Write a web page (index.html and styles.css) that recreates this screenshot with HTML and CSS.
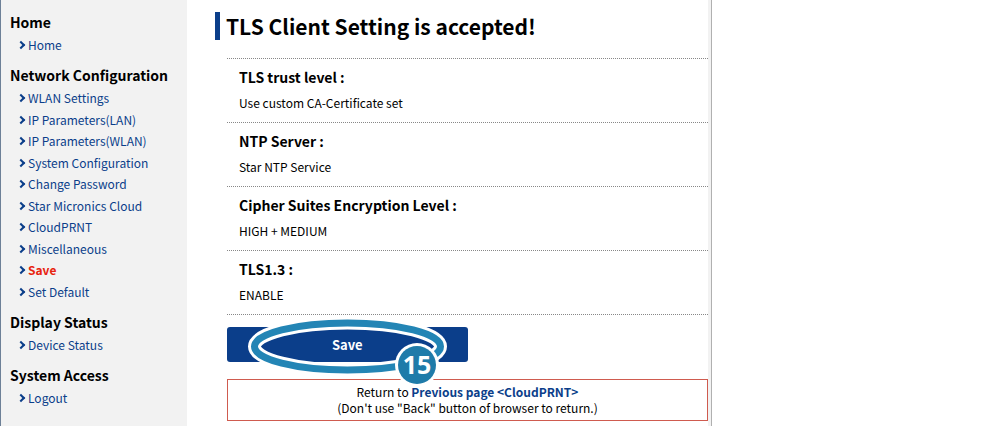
FILE: index.html
```html
<!DOCTYPE html>
<html lang="en">

<head>
    <meta charset="UTF-8">
    <meta name="viewport" content="width=device-width, initial-scale=1.0">
    <title>TLS Client Setting</title>
    <link rel="stylesheet" href="styles.css">
</head>

<body>
    <div class="page">
        <!-- side menu -->
        <nav class="side">
            <h2>Home</h2>
            <ul>
                <li><a href="#">Home</a></li>
            </ul>
            <h2>Network Configuration</h2>
            <ul>
                <li><a href="#">WLAN Settings</a></li>
                <li><a href="#">IP Parameters(LAN)</a></li>
                <li><a href="#">IP Parameters(WLAN)</a></li>
                <li><a href="#">System Configuration</a></li>
                <li><a href="#">Change Password</a></li>
                <li><a href="#">Star Micronics Cloud</a></li>
                <li><a href="#">CloudPRNT</a></li>
                <li><a href="#">Miscellaneous</a></li>
                <li><a class="current" href="#">Save</a></li>
                <li><a href="#">Set Default</a></li>
            </ul>
            <h2>Display Status</h2>
            <ul>
                <li><a href="#">Device Status</a></li>
            </ul>
            <h2>System Access</h2>
            <ul>
                <li><a href="#">Logout</a></li>
            </ul>
        </nav>

        <main class="main">
            <h1>TLS Client Setting is accepted!</h1>

            <div class="content">
                <dl class="settings">
                    <div class="row">
                        <dt>TLS trust level :</dt>
                        <dd>Use custom CA-Certificate set</dd>
                    </div>
                    <div class="row">
                        <dt>NTP Server :</dt>
                        <dd>Star NTP Service</dd>
                    </div>
                    <div class="row">
                        <dt>Cipher Suites Encryption Level :</dt>
                        <dd>HIGH + MEDIUM</dd>
                    </div>
                    <div class="row">
                        <dt>TLS1.3 :</dt>
                        <dd>ENABLE</dd>
                    </div>
                </dl>

                <div class="action">
                    <button class="save" type="button">Save</button>
                    <!-- step marker -->
                    <svg class="marker" width="204" height="74" viewBox="0 0 204 74">
                        <ellipse cx="101.5" cy="30.5" rx="93" ry="23.5" fill="none" stroke="#fff" stroke-width="13" />
                        <ellipse cx="101.5" cy="30.5" rx="93" ry="23.5" fill="none" stroke="#2385b5" stroke-width="7" />
                        <circle cx="171" cy="49" r="22" fill="#fff" />
                        <circle cx="171" cy="49" r="19" fill="#1f7ba9" />
                        <text class="step" x="171" y="58" text-anchor="middle">15</text>
                    </svg>
                </div>

                <p class="notice">
                    Return to <a href="#">Previous page &lt;CloudPRNT&gt;</a><br>
                    (Don't use "Back" button of browser to return.)
                </p>
            </div>
        </main>
    </div>
</body>

</html>
```
FILE: styles.css
```css
* {
    margin: 0;
    padding: 0;
    box-sizing: border-box;
}

body {
    font-family: "Noto Sans CJK JP", "Noto Sans", sans-serif;
    font-size: 12px;
    color: #000;
    background-color: #fff;
}

li {
    list-style: none;
}

a {
    color: #0b3e8a;
    text-decoration: none;
}

.page {
    display: flex;
    max-width: 712px;
    min-height: 100vh;
    border-right: 1px solid #b0b0b0;
}

/* side menu */
.side {
    flex: 0 0 187px;
    padding: 10px 0 0 9px;
    background-color: #f2f2f2;
    border-left: 1px solid #6d8097;
}

.side h2 {
    font-size: 14px;
    line-height: 24px;
}

.side ul {
    padding: 0 0 8px 8px;
}

.side li {
    line-height: 21px;
}

.side li:nth-child(odd) {
    padding-bottom: 1px;
}

.side li:only-child {
    padding-bottom: 0;
}

.side a {
    display: flex;
    align-items: center;
    gap: 4px;
}

.side a::before {
    content: "";
    width: 4px;
    height: 4px;
    border: solid #0b3e8a;
    border-width: 2px 2px 0 0;
    transform: rotate(45deg);
}

.side .current {
    color: #e8230f;
    font-weight: bold;
}

/* main */
.main {
    flex: 1;
    padding: 12px 0 4px 28px;
    border-right: 3px solid #f2f2f2;
}

h1 {
    padding-left: 6px;
    font-size: 21px;
    line-height: 28px;
    border-left: 5px solid #0b3e8a;
}

.content {
    padding: 18px 0 0 12px;
}

.settings {
    border-top: 1px dotted #888;
}

.row {
    padding: 7px 12px 9px;
    border-bottom: 1px dotted #888;
}

.row dt {
    font-size: 14px;
    font-weight: bold;
    line-height: 23px;
}

.row dd {
    padding-top: 4px;
    line-height: 20px;
}

.action {
    position: relative;
    padding: 12px 0 17px;
}

.save {
    display: block;
    width: 50%;
    height: 35px;
    font: bold 13px "Noto Sans CJK JP", "Noto Sans", sans-serif;
    color: #fff;
    background-color: #0b3e8a;
    border: 0;
    border-radius: 3px;
}

.marker {
    position: absolute;
    top: 1px;
    left: 19px;
    pointer-events: none;
}

.step {
    font: bold 25px "Open Sans", "Noto Sans", sans-serif;
    fill: #fff;
}

.notice {
    padding: 4px 0;
    line-height: 16px;
    text-align: center;
    border: 1px solid #cf5b4f;
}

.notice a {
    font-weight: bold;
}
```
